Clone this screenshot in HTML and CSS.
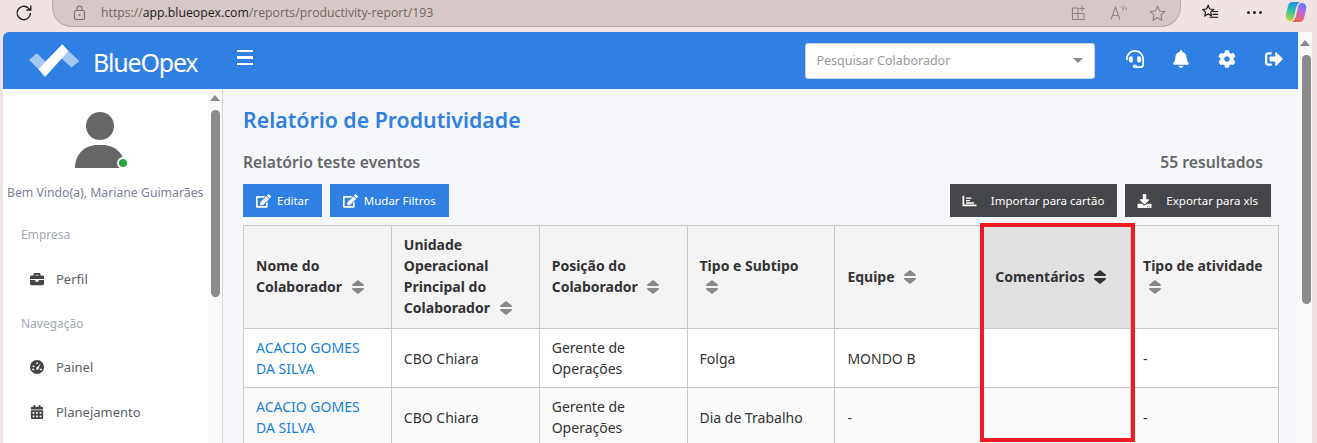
FILE: index.html
```html
<!DOCTYPE html>
<html lang="pt-BR">
<head>
  <meta charset="UTF-8">
  <title>Relatório de Produtividade</title>
  <link rel="stylesheet" href="styles.css">
</head>
<body>

  <svg class="sprite" xmlns="http://www.w3.org/2000/svg">
    <symbol id="i-sort" viewBox="17 50 286 412" preserveAspectRatio="none"><path d="M41 288h238c21.4 0 32.1 25.9 17 41L177 448c-9.4 9.4-24.6 9.4-33.9 0L24 329c-15.1-15.1-4.4-41 17-41zm255-105L177 64c-9.4-9.4-24.6-9.4-33.9 0L24 183c-15.1 15.1-4.4 41 17 41h238c21.4 0 32.1-25.9 17-41z"/></symbol>
    <symbol id="i-edit" viewBox="0 0 576 512"><path d="M402.6 83.2l90.2 90.2c3.8 3.8 3.8 10 0 13.8L274.4 405.6l-92.8 10.3c-12.4 1.4-22.9-9.1-21.5-21.5l10.3-92.8L388.8 83.2c3.8-3.8 10-3.8 13.8 0zm162-22.9l-48.8-48.8c-15.2-15.2-39.9-15.2-55.2 0l-35.4 35.4c-3.8 3.8-3.8 10 0 13.8l90.2 90.2c3.8 3.8 10 3.8 13.8 0l35.4-35.4c15.2-15.3 15.2-40 0-55.2zM384 346.2V448H64V128h229.8c3.2 0 6.2-1.3 8.5-3.5l40-40c7.6-7.6 2.2-20.5-8.5-20.5H48C21.5 64 0 85.5 0 112v352c0 26.5 21.5 48 48 48h352c26.5 0 48-21.5 48-48V306.2c0-10.7-12.9-16-20.5-8.5l-40 40c-2.2 2.3-3.5 5.3-3.5 8.5z"/></symbol>
  </svg>

  <div class="browser-bar">
    <svg class="reload" viewBox="0 0 20 20" width="20" height="20"><path d="M16.5 10a6.7 6.7 0 1 1-2-4.8L16.5 7M16.8 2.6V7h-4.4" fill="none" stroke="#222" stroke-width="1.4"/></svg>
    <div class="address">
      <svg class="lock" viewBox="0 0 14 16" width="14" height="16"><rect x="1.5" y="5.5" width="10" height="9" rx="1.5" fill="none" stroke="#7d7674" stroke-width="1.2"/><path d="M4 5.5V3.6a2.5 2.5 0 0 1 5 0v1.9" fill="none" stroke="#7d7674" stroke-width="1.2"/><circle cx="6.5" cy="10" r="1" fill="#7d7674"/></svg>
      <span class="url">https://<b>app.blueopex.com</b>/reports/productivity-report/193</span>
      <span class="address-icons">
        <svg viewBox="0 0 16 16" width="16" height="16"><path d="M8 3H2.500v11.500h11.500V8M1.500 8.500h12.500M8 3v11.500M12 .5v6M9 3.500h6" fill="none" stroke="#8d8583" stroke-width="1.100"/></svg>
        <svg viewBox="0 0 18 16" width="18" height="16"><path d="M1 14.500L5.500 2 10 14.500M2.700 10.500h5.800" fill="none" stroke="#8d8583" stroke-width="1.100"/><path d="M11 1.500a5 5 0 0 1 2.500 4M13.500.5a7 7 0 0 1 3 4.500" fill="none" stroke="#8d8583"/></svg>
        <svg class="star" viewBox="0 0 18 18" width="17" height="17"><path d="M9 1.500l2.300 4.900 5.300.7-3.900 3.700 1 5.300L9 13.500l-4.700 2.600 1-5.300L1.400 7.100l5.300-.7z" fill="none" stroke="#8d8583" stroke-width="1.200"/></svg>
      </span>
    </div>
    <svg class="favorites" viewBox="0 0 18 18" width="17" height="17"><path d="M6.500 1.500l1.700 3.800 4 .5-3 2.800.8 4-3.500-2-3.500 2 .8-4-3-2.800 4-.5z" fill="none" stroke="#111" stroke-width="1.200"/><path d="M11 8h6M11 11h6M8 14h9" stroke="#111" stroke-width="1.200"/></svg>
    <span class="more-dots"><i></i><i></i><i></i></span>
    <svg class="copilot" viewBox="0 0 22 22" width="22" height="22">
      <defs>
        <linearGradient id="copilot-left" x1="0.600" y1="0" x2="0.300" y2="1"><stop offset="0" stop-color="#1f8fe8"/><stop offset="0.500" stop-color="#2fc4a0"/><stop offset="1" stop-color="#c4d23c"/></linearGradient>
        <linearGradient id="copilot-right" x1="0.700" y1="0" x2="0.300" y2="1"><stop offset="0" stop-color="#5b7cf0"/><stop offset="0.450" stop-color="#c866dd"/><stop offset="1" stop-color="#f2683c"/></linearGradient>
      </defs>
      <path d="M7 1h8c-2 1-3 3-4 6l-2 9c-.5 2.500-2 4-4 4-3.500 0-5-3-4-7l2-8C3.500 2.500 5 1 7 1z" fill="url(#copilot-left)"/>
      <path d="M15 21H7c2-1 3-3 4-6l2-9c.5-2.500 2-4 4-4 3.500 0 5 3 4 7l-2 8c-.5 2.500-2 4-4 4z" fill="url(#copilot-right)"/>
    </svg>
  </div>

  <div class="app">
    <div class="app-body">

      <header class="topbar">
        <svg class="logo-mark" viewBox="0 0 52 36" width="52" height="36">
          <path d="M0 17l7.700-6.700 8.800 8.200-7.200 7.500z" fill="#a6c9f4"/>
          <path d="M39.500 8l10.800 10-7.600 6.500L32 15z" fill="#a6c9f4"/>
          <path d="M9.300 26L33.300 1.300 39.500 8 16 34z" fill="#fff"/>
        </svg>
        <span class="logo-text">BlueOpex</span>
        <span class="burger"><i></i><i></i><i></i></span>
        <div class="search">
          <span>Pesquisar Colaborador</span>
          <i class="caret"></i>
        </div>
        <div class="top-icons">
          <svg viewBox="0 0 512 512" width="18" height="18"><path d="M192 208c0-17.670-14.330-32-32-32h-16c-35.350 0-64 28.650-64 64v48c0 35.350 28.650 64 64 64h16c17.670 0 32-14.330 32-32V208zm176 144c35.350 0 64-28.650 64-64v-48c0-35.350-28.650-64-64-64h-16c-17.670 0-32 14.330-32 32v112c0 17.670 14.330 32 32 32h16zM256 0C113.180 0 4.580 118.830 0 256v16c0 8.840 7.160 16 16 16h16c8.840 0 16-7.160 16-16v-16c0-114.690 93.310-208 208-208s208 93.310 208 208h-.12c.08 2.430.12 165.720.12 165.720 0 23.350-18.930 42.280-42.280 42.280H320c0-26.510-21.490-48-48-48h-32c-26.510 0-48 21.490-48 48s21.490 48 48 48h181.720c49.860 0 90.280-40.420 90.280-90.280V256C507.420 118.830 398.820 0 256 0z"/></svg>
          <svg viewBox="0 0 448 512" width="16" height="18"><path d="M224 512c35.320 0 63.970-28.650 63.970-64H160.030c0 35.350 28.650 64 63.970 64zm215.390-149.710c-19.320-20.760-55.470-51.990-55.470-154.290 0-77.700-54.480-139.900-127.940-155.160V32c0-17.670-14.320-32-31.980-32s-31.980 14.330-31.980 32v20.840C118.560 68.100 64.080 130.300 64.080 208c0 102.300-36.150 133.530-55.470 154.290-6 6.450-8.660 14.160-8.610 21.710.11 16.400 12.980 32 32.100 32h383.800c19.120 0 32-15.600 32.100-32 .05-7.550-2.610-15.270-8.610-21.710z"/></svg>
          <svg viewBox="0 0 512 512" width="18" height="18"><path d="M487.400 315.700l-42.600-24.600c4.300-23.200 4.300-47 0-70.200l42.600-24.600c4.900-2.800 7.100-8.600 5.500-14-11.100-35.600-30-67.800-54.700-94.600-3.800-4.100-10-5.100-14.800-2.300L380.800 110c-17.900-15.400-38.500-27.300-60.800-35.100V25.800c0-5.600-3.900-10.500-9.400-11.700-36.700-8.200-74.300-7.800-109.200 0-5.500 1.200-9.400 6.100-9.400 11.700V75c-22.200 7.900-42.800 19.800-60.800 35.100L88.700 85.500c-4.900-2.800-11-1.900-14.800 2.300-24.700 26.700-43.600 58.900-54.700 94.600-1.700 5.400.6 11.200 5.500 14L67.300 221c-4.300 23.200-4.300 47 0 70.200l-42.600 24.600c-4.900 2.800-7.100 8.600-5.500 14 11.100 35.600 30 67.800 54.700 94.600 3.800 4.100 10 5.100 14.800 2.300l42.600-24.600c17.900 15.400 38.500 27.300 60.800 35.100v49.200c0 5.600 3.900 10.500 9.400 11.700 36.700 8.200 74.300 7.800 109.200 0 5.500-1.200 9.400-6.100 9.400-11.700v-49.200c22.200-7.900 42.800-19.800 60.800-35.100l42.600 24.600c4.900 2.800 11 1.900 14.800-2.300 24.700-26.700 43.600-58.900 54.700-94.600 1.500-5.500-.7-11.300-5.600-14.100zM256 336c-44.100 0-80-35.900-80-80s35.900-80 80-80 80 35.900 80 80-35.900 80-80 80z"/></svg>
          <svg viewBox="0 0 512 512" width="18" height="18"><path d="M497 273L329 441c-15 15-41 4.500-41-17v-96H152c-13.300 0-24-10.700-24-24v-96c0-13.300 10.700-24 24-24h136V88c0-21.400 25.900-32 41-17l168 168c9.300 9.400 9.300 24.600 0 34zM192 436v-40c0-6.600-5.400-12-12-12H96c-17.700 0-32-14.300-32-32V160c0-17.700 14.300-32 32-32h84c6.600 0 12-5.400 12-12V76c0-6.600-5.400-12-12-12H96c-53 0-96 43-96 96v192c0 53 43 96 96 96h84c6.600 0 12-5.400 12-12z"/></svg>
        </div>
      </header>

      <div class="content-row">
        <aside class="sidebar">
          <div class="sidebar-inner">
            <div class="avatar">
              <svg viewBox="0 0 50 56" width="50" height="56"><circle cx="25" cy="14" r="14" fill="#666"/><path d="M0 56C0 42 10 33 22 33h6c12 0 22 9 22 23z" fill="#666"/></svg>
              <span class="online-dot"></span>
            </div>
            <div class="welcome">Bem Vindo(a), Mariane Guimarães</div>
            <div class="nav-title nav-title-first">Empresa</div>
            <a class="nav-item">
              <svg viewBox="0 0 512 512" width="14" height="14"><path d="M320 336c0 8.840-7.160 16-16 16h-96c-8.840 0-16-7.160-16-16v-48H0v144c0 25.600 22.400 48 48 48h416c25.600 0 48-22.400 48-48V288H320v48zm144-208h-80V80c0-25.600-22.400-48-48-48H176c-25.600 0-48 22.400-48 48v48H48c-25.600 0-48 22.400-48 48v80h512v-80c0-25.600-22.400-48-48-48zm-144 0H192V96h128v32z"/></svg>
              Perfil
            </a>
            <div class="nav-title nav-title-second">Navegação</div>
            <a class="nav-item">
              <svg viewBox="0 0 16 16" width="14" height="14"><path fill-rule="evenodd" d="M8 0a8 8 0 1 1 0 16A8 8 0 0 1 8 0zM7.200 2.500v2.200h1.600V2.500zM3.500 6l-.8 1.300 1.900 1 .8-1.300zm8.700-2.300L8.600 8a1.600 1.600 0 1 0 1.400 1zM2.500 10v1.600h2.200V10zm8.800 0v1.600h2.200V10z"/></svg>
              Painel
            </a>
            <a class="nav-item">
              <svg viewBox="0 0 448 512" width="14" height="14"><path d="M0 464c0 26.500 21.500 48 48 48h352c26.500 0 48-21.500 48-48V192H0v272zm320-196c0-6.600 5.400-12 12-12h40c6.600 0 12 5.400 12 12v40c0 6.600-5.400 12-12 12h-40c-6.600 0-12-5.400-12-12v-40zm0 128c0-6.600 5.400-12 12-12h40c6.600 0 12 5.400 12 12v40c0 6.600-5.400 12-12 12h-40c-6.600 0-12-5.400-12-12v-40zM192 268c0-6.600 5.400-12 12-12h40c6.600 0 12 5.400 12 12v40c0 6.600-5.400 12-12 12h-40c-6.600 0-12-5.400-12-12v-40zm0 128c0-6.600 5.400-12 12-12h40c6.600 0 12 5.400 12 12v40c0 6.600-5.400 12-12 12h-40c-6.600 0-12-5.400-12-12v-40zM64 268c0-6.600 5.400-12 12-12h40c6.600 0 12 5.400 12 12v40c0 6.600-5.400 12-12 12H76c-6.600 0-12-5.400-12-12v-40zm0 128c0-6.600 5.400-12 12-12h40c6.600 0 12 5.400 12 12v40c0 6.600-5.400 12-12 12H76c-6.600 0-12-5.400-12-12v-40zM400 64h-48V16c0-8.800-7.200-16-16-16h-32c-8.800 0-16 7.200-16 16v48H160V16c0-8.800-7.200-16-16-16h-32c-8.800 0-16 7.200-16 16v48H48C21.500 64 0 85.500 0 112v48h448v-48c0-26.500-21.500-48-48-48z"/></svg>
              Planejamento
            </a>
          </div>
          <div class="sidebar-scroll">
            <i class="arrow-up"></i>
            <i class="thumb"></i>
          </div>
        </aside>

        <main class="main">
          <h1>Relatório de Produtividade</h1>
          <div class="report-head">
            <h2>Relatório teste eventos</h2>
            <span>55 resultados</span>
          </div>
          <div class="actions">
            <button class="btn btn-blue"><svg><use href="#i-edit"/></svg>Editar</button>
            <button class="btn btn-blue"><svg><use href="#i-edit"/></svg>Mudar Filtros</button>
            <button class="btn btn-dark btn-push">
              <svg viewBox="0 0 512 512"><path d="M500 384c6.600 0 12 5.400 12 12v40c0 6.600-5.400 12-12 12H12c-6.600 0-12-5.400-12-12V76c0-6.600 5.400-12 12-12h40c6.600 0 12 5.400 12 12v308zM128 128h200v50H128zM128 216h140v50H128zM128 304h290v50H128z"/></svg>
              Importar para cartão
            </button>
            <button class="btn btn-dark">
              <svg viewBox="0 0 512 512"><path d="M216 0h80c13.300 0 24 10.700 24 24v168h87.700c17.800 0 26.700 21.500 14.100 34.100L269.700 378.300c-7.500 7.500-19.800 7.500-27.300 0L90.100 226.100c-12.600-12.600-3.700-34.100 14.100-34.100H192V24c0-13.300 10.700-24 24-24zm296 376v112c0 13.300-10.700 24-24 24H24c-13.300 0-24-10.700-24-24V376c0-13.300 10.700-24 24-24h146.700l49 49c20.100 20.100 52.500 20.100 72.600 0l49-49H488c13.300 0 24 10.700 24 24zm-124 88c0-11-9-20-20-20s-20 9-20 20 9 20 20 20 20-9 20-20zm64 0c0-11-9-20-20-20s-20 9-20 20 9 20 20 20 20-9 20-20z"/></svg>
              Exportar para xls
            </button>
          </div>

          <div class="table-wrap">
            <table class="report-table">
              <thead>
                <tr>
                  <th>Nome do Colaborador <svg class="sort"><use href="#i-sort"/></svg></th>
                  <th>Unidade Operacional Principal do Colaborador <svg class="sort"><use href="#i-sort"/></svg></th>
                  <th>Posição do Colaborador <svg class="sort"><use href="#i-sort"/></svg></th>
                  <th>Tipo e Subtipo <svg class="sort"><use href="#i-sort"/></svg></th>
                  <th>Equipe <svg class="sort"><use href="#i-sort"/></svg></th>
                  <th class="sorted">Comentários <svg class="sort"><use href="#i-sort"/></svg></th>
                  <th>Tipo de atividade <svg class="sort"><use href="#i-sort"/></svg></th>
                </tr>
              </thead>
              <tbody>
                <tr>
                  <td><a>ACACIO GOMES DA SILVA</a></td>
                  <td>CBO Chiara</td>
                  <td>Gerente de Operações</td>
                  <td>Folga</td>
                  <td>MONDO B</td>
                  <td></td>
                  <td>-</td>
                </tr>
                <tr>
                  <td><a>ACACIO GOMES DA SILVA</a></td>
                  <td>CBO Chiara</td>
                  <td>Gerente de Operações</td>
                  <td>Dia de Trabalho</td>
                  <td>-</td>
                  <td></td>
                  <td>-</td>
                </tr>
              </tbody>
            </table>
            <div class="highlight-box"></div>
          </div>
        </main>
      </div>
    </div>

    <div class="window-scroll">
      <i class="arrow-up"></i>
      <i class="thumb"></i>
    </div>
  </div>

</body>
</html>
```

FILE: styles.css
```css
html, body {
  height: 443px;
  overflow: hidden;
}

body {
  margin: 0;
  background: #f0e3e1;
  font-family: "Noto Sans", "Open Sans", sans-serif;
  font-size: 14px;
  color: #333;
}

.sprite {
  display: none;
}

/* browser chrome */
.browser-bar {
  height: 32px;
  display: flex;
  align-items: flex-start;
}

.reload {
  margin: 3px 0 0 14px;
}

.address {
  width: 1129px;
  height: 27px;
  margin-left: 18px;
  box-sizing: border-box;
  padding-left: 20px;
  background: #d6c8c6;
  border: 1px solid #b5a9a7;
  border-top: 0;
  border-radius: 0 0 20px 20px;
  display: flex;
  align-items: center;
}

.lock {
  margin-right: 14px;
}

.url {
  font-family: "Open Sans", sans-serif;
  font-size: 12.25px;
  margin-top: -1px;
  color: #6f6765;
}

.url b {
  font-weight: 400;
  color: #1c1c1c;
}

.address-icons {
  margin-left: auto;
  margin-right: 14px;
  display: flex;
  align-items: center;
  gap: 24px;
}

.star {
  margin-left: -3px;
}

.favorites {
  margin: 4px 0 0 21px;
}

.more-dots {
  margin: 11px 0 0 28px;
  display: flex;
  gap: 3px;
}

.more-dots i {
  width: 3px;
  height: 3px;
  border-radius: 50%;
  background: #222;
}

.copilot {
  margin: 1px 0 0 23px;
}

/* app */
.app {
  margin-left: 3px;
  height: 411px;
  display: flex;
}

.app-body {
  width: 1295px;
  display: flex;
  flex-direction: column;
}

.topbar {
  height: 57px;
  flex: none;
  background: #3080e3;
  border-radius: 6px 0 0 0;
  display: flex;
  align-items: center;
  color: #fff;
  padding-left: 26px;
  box-sizing: border-box;
}

.logo-mark {
  margin-top: 1px;
}

.logo-text {
  margin-left: 12px;
  font-size: 25px;
  letter-spacing: -1.2px;
  margin-top: 3px;
}

.burger {
  margin: -6px 0 0 40px;
  display: flex;
  flex-direction: column;
  gap: 4px;
}

.burger i {
  width: 16px;
  height: 2.500px;
  background: #fff;
}

.search {
  width: 290px;
  height: 36px;
  margin-left: 552px;
  box-sizing: border-box;
  padding: 0 11px 0 10px;
  background: #fff;
  border: 1px solid #ced4da;
  border-radius: 3px;
  display: flex;
  align-items: center;
  justify-content: space-between;
  color: #999;
  font-size: 12.5px;
}

.caret {
  width: 0;
  height: 0;
  border-left: 5px solid transparent;
  border-right: 5px solid transparent;
  border-top: 5px solid #888;
}

.top-icons {
  margin: -3px 0 0 31px;
  display: flex;
  align-items: center;
  gap: 29px;
  fill: #fff;
}

.content-row {
  flex: 1;
  display: flex;
  min-height: 0;
}

/* sidebar */
.sidebar {
  width: 220px;
  flex: none;
  background: #fff;
  border-right: 1px solid #d6d6d6;
  box-sizing: border-box;
  display: flex;
}

.sidebar-inner {
  width: 205px;
  flex: none;
}

.avatar {
  position: relative;
  width: 50px;
  height: 56px;
  margin: 23px 0 0 72px;
}

.avatar svg {
  display: block;
}

.online-dot {
  position: absolute;
  right: -4px;
  bottom: -1px;
  width: 8px;
  height: 8px;
  background: #28a745;
  border: 2px solid #fff;
  border-radius: 50%;
}

.welcome {
  margin-top: 16px;
  padding-left: 4px;
  white-space: nowrap;
  font-size: 12.25px;
  line-height: 18px;
  color: #7a8296;
}

.nav-title {
  margin: 14px 0 0 18px;
  font-size: 12px;
  line-height: 18px;
  color: #a2a9b5;
}

.nav-title-first {
  margin-top: 24px;
}

.nav-title-second {
  margin-bottom: -1px;
}

.nav-item {
  display: flex;
  align-items: center;
  gap: 12px;
  height: 45px;
  padding-left: 27px;
  font-size: 13px;
  color: #5a5f69;
  fill: #444;
}

.nav-title + .nav-item {
  margin-top: 12px;
}

.sidebar-scroll {
  width: 14px;
  background: #fafafa;
  position: relative;
}

.arrow-up {
  display: block;
  width: 0;
  height: 0;
  margin: 6px auto 0;
  border-left: 5px solid transparent;
  border-right: 5px solid transparent;
  border-bottom: 6px solid #8a8a8a;
}

.thumb {
  display: block;
  background: #8b8b8b;
  border-radius: 5px;
}

.sidebar-scroll .thumb {
  width: 9px;
  height: 187px;
  margin: 9px 0 0 3px;
}

/* window scrollbar */
.window-scroll {
  width: 14px;
  height: 411px;
  background: #f9f9f9;
}

.window-scroll .arrow-up {
  margin-top: 8px;
}

.window-scroll .thumb {
  width: 9px;
  height: 249px;
  margin: 9px 0 0 4px;
}

/* main */
.main {
  flex: 1;
  min-width: 0;
  background: #f5f7fb;
  padding: 15px 0 0 20px;
  overflow: hidden;
}

h1 {
  margin: 0;
  font-size: 21.3px;
  line-height: 32px;
  font-weight: 600;
  color: #3080e3;
}

.report-head {
  margin-top: 14px;
  width: 1020px;
  display: flex;
  justify-content: space-between;
  font-size: 15.700px;
  line-height: 24px;
  font-weight: 600;
  color: #666;
}

.report-head h2 {
  margin: 0;
  font: inherit;
}

.actions {
  margin-top: 10px;
  width: 1028px;
  display: flex;
  gap: 8px;
}

.btn {
  height: 33px;
  border: 0;
  padding: 0 13px;
  display: flex;
  align-items: center;
  color: #fff;
  font-family: inherit;
  font-size: 11.500px;
  fill: #fff;
}

.btn svg {
  width: 15px;
  height: 14px;
  margin-right: 6px;
}

.btn-blue {
  background: #3080e3;
}

.btn-dark {
  background: #454649;
  padding-left: 12px;
}

.btn-dark svg {
  margin-right: 14px;
}

.btn-push {
  margin-left: auto;
}

.table-wrap {
  position: relative;
  margin-top: 8px;
  width: 1037px;
}

.report-table {
  width: 1036px;
  table-layout: fixed;
  border-collapse: collapse;
}

.report-table th,
.report-table td {
  border: 1px solid #c8c8c8;
  padding: 8px 12px;
  line-height: 21px;
  text-align: left;
}

.report-table th {
  background: #f4f4f4;
  font-weight: 700;
  font-size: 14px;
  color: #333;
  padding: 8px 15px 10px 12px;
}

.report-table th.sorted {
  background: #e0e0e0;
}

.report-table td {
  background: #fff;
  font-size: 14px;
}

.report-table tbody tr:nth-child(even) td {
  background: #fafafa;
}

.report-table a {
  color: #1a7fd4;
}

.sort {
  width: 12px;
  height: 14px;
  margin-left: 6px;
  vertical-align: -2px;
  fill: #888;
}

.sorted .sort {
  fill: #333;
}

/* annotation drawn on top of the column */
.highlight-box {
  position: absolute;
  top: -2px;
  left: 737px;
  width: 155px;
  height: 219px;
  box-sizing: border-box;
  border: 4px solid #ed1c24;
}
```
